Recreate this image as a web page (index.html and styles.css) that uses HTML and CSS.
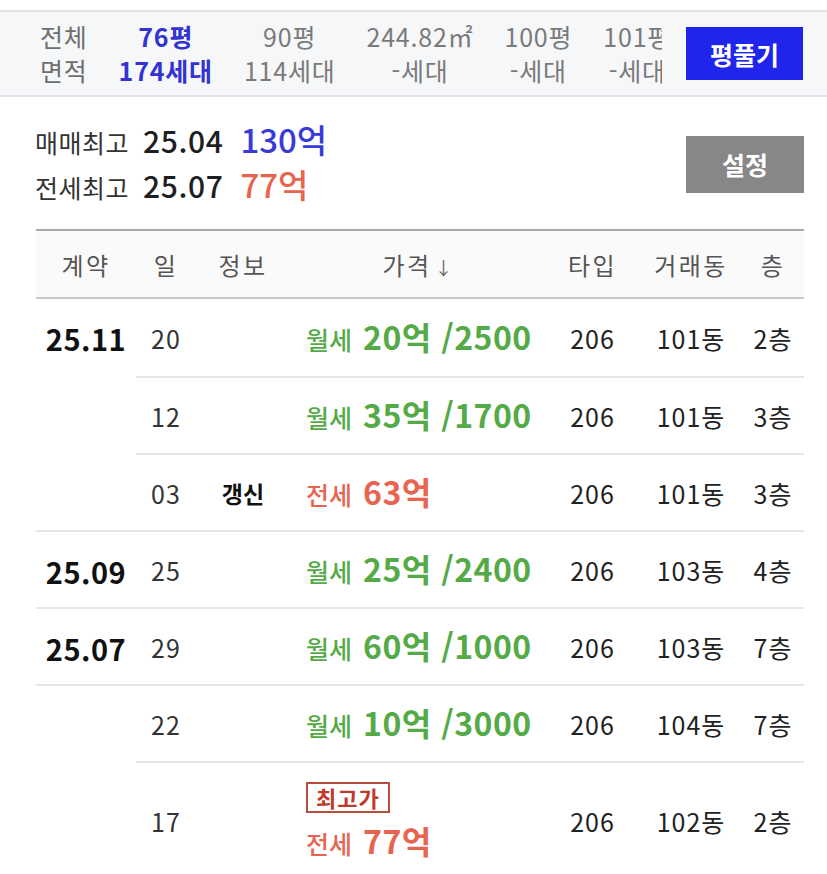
FILE: index.html
```html
<!DOCTYPE html>
<html lang="ko">
<head>
<meta charset="utf-8">
<link rel="stylesheet" href="styles.css">
</head>
<body>
<div class="area-bar">
  <div class="area-scroll">
    <div class="area-col label"><span>전체</span><span>면적</span></div>
    <div class="area-col active"><span>76평</span><span>174세대</span></div>
    <div class="area-col"><span>90평</span><span>114세대</span></div>
    <div class="area-col"><span>244.82㎡</span><span>-세대</span></div>
    <div class="area-col"><span>100평</span><span>-세대</span></div>
    <div class="area-col"><span>101평</span><span>-세대</span></div>
  </div>
  <button class="btn-blue">평풀기</button>
</div>

<div class="summary">
  <div class="summary-lines">
    <div class="sum-row"><span class="sum-label">매매최고</span><span class="sum-date">25.04</span><span class="sum-price blue">130억</span></div>
    <div class="sum-row"><span class="sum-label">전세최고</span><span class="sum-date">25.07</span><span class="sum-price red">77억</span></div>
  </div>
  <button class="btn-gray">설정</button>
</div>

<table class="deals">
  <colgroup>
    <col class="c-month"><col class="c-day"><col class="c-info"><col class="c-price"><col class="c-type"><col class="c-dong"><col class="c-floor">
  </colgroup>
  <thead>
    <tr><th>계약</th><th>일</th><th>정보</th><th>가격<span class="arrow">↓</span></th><th>타입</th><th>거래동</th><th>층</th></tr>
  </thead>
  <tbody>
    <tr class="first">
      <td class="month" rowspan="3">25.11</td>
      <td class="day">20</td><td class="info"></td>
      <td class="price green"><span class="kind">월세</span> <span class="amt">20억 /2500</span></td>
      <td>206</td><td>101동</td><td>2층</td>
    </tr>
    <tr>
      <td class="day">12</td><td class="info"></td>
      <td class="price green"><span class="kind">월세</span> <span class="amt">35억 /1700</span></td>
      <td>206</td><td>101동</td><td>3층</td>
    </tr>
    <tr>
      <td class="day">03</td><td class="info">갱신</td>
      <td class="price red"><span class="kind">전세</span> <span class="amt">63억</span></td>
      <td>206</td><td>101동</td><td>3층</td>
    </tr>
    <tr>
      <td class="month">25.09</td>
      <td class="day">25</td><td class="info"></td>
      <td class="price green"><span class="kind">월세</span> <span class="amt">25억 /2400</span></td>
      <td>206</td><td>103동</td><td>4층</td>
    </tr>
    <tr>
      <td class="month">25.07</td>
      <td class="day">29</td><td class="info"></td>
      <td class="price green"><span class="kind">월세</span> <span class="amt">60억 /1000</span></td>
      <td>206</td><td>103동</td><td>7층</td>
    </tr>
    <tr>
      <td class="month" rowspan="2"></td>
      <td class="day">22</td><td class="info"></td>
      <td class="price green"><span class="kind">월세</span> <span class="amt">10억 /3000</span></td>
      <td>206</td><td>104동</td><td>7층</td>
    </tr>
    <tr class="tall">
      <td class="day">17</td><td class="info"></td>
      <td class="price red">
        <div class="price-stack">
          <span class="badge">최고가</span>
          <span class="price-line"><span class="kind">전세</span> <span class="amt">77억</span></span>
        </div>
      </td>
      <td>206</td><td>102동</td><td>2층</td>
    </tr>
  </tbody>
</table>
</body>
</html>
```

FILE: styles.css
```css
* { box-sizing: border-box; }
html, body { margin: 0; padding: 0; background: #fff; }
body {
  width: 827px;
  font-family: "Noto Sans CJK KR", "Noto Sans", sans-serif;
  color: #222;
  overflow: hidden;
}

.area-bar {
  margin-top: 10px;
  height: 87px;
  background: #f6f7f9;
  border-top: 2px solid #e2e3e6;
  border-bottom: 2px solid #e2e3e6;
  display: flex;
  align-items: center;
  padding-left: 40px;
  padding-right: 24px;
}
.area-scroll {
  flex: 1;
  display: flex;
  gap: 31px;
  overflow: hidden;
  white-space: nowrap;
  margin-right: 24px;
  margin-top: -2px;
}
.area-col {
  display: flex;
  flex-direction: column;
  align-items: center;
  font-size: 25px;
  line-height: 34px;
  color: #7a7a7a;
  letter-spacing: 0.8px;
}
.area-col.label { color: #6e6e6e; }
.area-col.active { color: #3333d0; font-weight: 700; }

.btn-blue {
  width: 117px;
  height: 53px;
  border: none;
  background: #1f25ea;
  color: #fff;
  font-family: inherit;
  font-size: 25px;
  font-weight: 700;
  padding: 0;
}

.summary {
  display: flex;
  align-items: center;
  justify-content: space-between;
  padding: 20px 23px 22px 35px;
  height: 132px;
}
.summary-lines { display: flex; flex-direction: column; }
.sum-row {
  display: flex;
  align-items: baseline;
  height: 45px;
  line-height: 45px;
}
.sum-label { font-size: 25px; color: #333; letter-spacing: 0.5px; margin-right: 14px; }
.sum-date { font-size: 30px; font-weight: 500; color: #1e1e1e; margin-right: 17px; letter-spacing: 0.6px; }
.sum-price { font-size: 33px; font-weight: 500; }
.blue { color: #3a3ad6; }
.red { color: #e8644f; }
.green { color: #57ab4b; }

.btn-gray {
  width: 118px;
  height: 57px;
  border: none;
  background: #878787;
  color: #fff;
  font-family: inherit;
  font-size: 25px;
  font-weight: 700;
  padding: 0;
  margin-top: 4px;
}

.deals {
  margin-left: 36px;
  width: 768px;
  border-collapse: collapse;
  table-layout: fixed;
}
.c-month { width: 100px; }
.c-day { width: 60px; }
.c-info { width: 94px; }
.c-price { width: 255px; }
.c-type { width: 95px; }
.c-dong { width: 102px; }
.c-floor { width: 62px; }

.deals th {
  height: 68px;
  background: #fafafa;
  border-top: 2px solid #a9a9a9;
  border-bottom: 2px solid #c8c8c8;
  font-size: 24px;
  letter-spacing: 2.5px;
  font-weight: 400;
  color: #555;
  text-align: center;
  padding: 0;
}
.deals th .arrow { font-size: 18px; color: #666; letter-spacing: 0; margin-left: 3px; }

.deals td {
  height: 77px;
  border-bottom: 2px solid #e6e6e6;
  text-align: center;
  vertical-align: middle;
  font-size: 25px;
  letter-spacing: 1px;
  color: #222;
  padding: 0;
  white-space: nowrap;
}
.deals tr.first td { height: 79px; }
.deals td.month {
  vertical-align: top;
  padding-top: 3px;
  line-height: 72px;
  font-size: 29px;
  letter-spacing: 0.5px;
  font-weight: 700;
  color: #111;
}
.deals td.day { color: #333; font-size: 25px; }
.deals td.info { font-weight: 700; font-size: 23px; letter-spacing: 0; color: #111; }
.deals td.price {
  text-align: left;
  padding-left: 16px;
  line-height: 38px;
  letter-spacing: 0;
}
.deals td.green { color: #55aa48; }
.deals td.red { color: #e8644f; }
.kind { font-size: 25px; font-weight: 500; margin-right: 4px; }
.amt { font-size: 32px; font-weight: 700; letter-spacing: 0.5px; }
.deals tr.tall td { height: 117px; border-bottom: none; }
.price-stack {
  display: flex;
  flex-direction: column;
  align-items: flex-start;
  gap: 8px;
  margin-top: 2px;
}
.badge {
  display: block;
  height: 31px;
  line-height: 27px;
  padding: 0 8px;
  border: 2px solid #b84c3f;
  color: #c0392b;
  font-size: 22px;
  letter-spacing: 1px;
  font-weight: 700;
}
.price-line { display: block; }
```
